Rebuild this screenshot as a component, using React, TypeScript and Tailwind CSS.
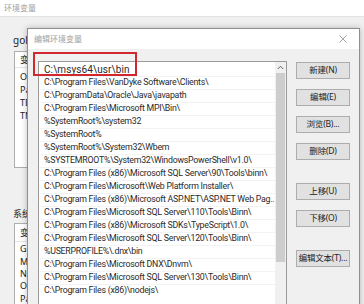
import React from "react";

const paths: string[] = [
  "C:\\Program Files\\VanDyke Software\\Clients\\",
  "C:\\ProgramData\\Oracle\\Java\\javapath",
  "C:\\Program Files\\Microsoft MPI\\Bin\\",
  "%SystemRoot%\\system32",
  "%SystemRoot%",
  "%SystemRoot%\\System32\\Wbem",
  "%SYSTEMROOT%\\System32\\WindowsPowerShell\\v1.0\\",
  "C:\\Program Files (x86)\\Microsoft SQL Server\\90\\Tools\\binn\\",
  "C:\\Program Files\\Microsoft\\Web Platform Installer\\",
  "C:\\Program Files (x86)\\Microsoft ASP.NET\\ASP.NET Web Pag...",
  "C:\\Program Files\\Microsoft SQL Server\\110\\Tools\\Binn\\",
  "C:\\Program Files (x86)\\Microsoft SDKs\\TypeScript\\1.0\\",
  "C:\\Program Files\\Microsoft SQL Server\\120\\Tools\\Binn\\",
  "%USERPROFILE%\\.dnx\\bin",
  "C:\\Program Files\\Microsoft DNX\\Dnvm\\",
  "C:\\Program Files\\Microsoft SQL Server\\130\\Tools\\Binn\\",
  "C:\\Program Files (x86)\\nodejs\\",
];

const font = {
  fontFamily: '"Noto Sans", "Noto Sans CJK SC", sans-serif',
};

const listFont = {
  fontFamily: 'Roboto, "Noto Sans CJK SC", sans-serif',
};

function Btn({ label, className }: { label: string; className?: string }) {
  return (
    <div
      className={
        "w-[54px] h-[17px] border border-[#adadad] bg-[#e1e1e1] flex items-center justify-center whitespace-nowrap text-[8.5px] tracking-[-0.2px] leading-none text-[#222] " +
        (className ?? "")
      }
    >
      {label}
    </div>
  );
}

export default function App() {
  return (
    <div
      className="w-[364px] h-[304px] relative overflow-hidden bg-[#f0f0f0]"
      style={font}
    >
      {/* background window */}
      <div className="h-[17px] bg-white border-b border-[#e3e3e3] pl-[4px] flex items-center text-[8px] text-[#a0a0a0]">
        环境变量
      </div>
      <div className="w-[28px] overflow-hidden pl-[13px]">
        <div className="mt-[17px] h-[12px] flex items-center whitespace-nowrap text-[10px] text-[#222]">
          gola
        </div>
        <div className="mt-[5px] ml-[1px] w-[60px] h-[117px] border border-[#adadad] bg-white text-[9px] text-[#222]">
          <div className="h-[16px] pl-[5px] flex items-center border-b border-[#e5e5e5]">变</div>
          <div className="h-[13px] pl-[5px] mt-[2px] flex items-center">O</div>
          <div className="h-[13px] pl-[5px] flex items-center">Pa</div>
          <div className="h-[13px] pl-[5px] flex items-center">TE</div>
          <div className="h-[13px] pl-[5px] flex items-center">TM</div>
        </div>
        <div className="mt-[40px] h-[12px] flex items-center whitespace-nowrap text-[9px] text-[#222]">
          系统
        </div>
        <div className="mt-[3px] ml-[1px] w-[60px] h-[100px] border border-[#adadad] bg-white text-[9px] text-[#222]">
          <div className="h-[18px] pl-[5px] flex items-center border-b border-[#e5e5e5]">变</div>
          <div className="h-[13px] pl-[5px] flex items-center">G</div>
          <div className="h-[13px] pl-[5px] flex items-center">M</div>
          <div className="h-[12px] pl-[5px] flex items-center">N</div>
          <div className="h-[12px] pl-[5px] flex items-center">O</div>
          <div className="h-[14px] pl-[5px] flex items-center">Pa</div>
        </div>
      </div>

      {/* front dialog */}
      <div className="absolute left-[27px] top-[28px] w-[333px] h-[290px] bg-[#f0f0f0] border border-[#8f8f8f] shadow-[0_0_6px_rgba(0,0,0,0.25)]">
        <div className="h-[20px] bg-white flex items-center justify-between pl-[6px] pr-[12px]">
          <span className="text-[8px] text-[#a0a0a0]">编辑环境变量</span>
          <svg width="8" height="8" viewBox="0 0 8 8">
            <path d="M0.5 0.5 L7.5 7.5 M7.5 0.5 L0.5 7.5" stroke="#9a9a9a" strokeWidth="0.9" />
          </svg>
        </div>
        <div className="flex pl-[10px] pt-[12px]">
          <div className="w-[249px] h-[260px] border border-[#9a9a9a] bg-white flex">
            <div
              className="flex-1 min-w-0 flex flex-col text-[8.8px] tracking-[-0.25px] text-[#2a2a2a]"
              style={listFont}
            >
              <div className="h-[14px] pl-[5px] flex items-center whitespace-nowrap text-[10px] tracking-[0.1px]">
                {"C:\\msys64\\usr\\bin"}
              </div>
              {paths.map((p, i) => (
                <div
                  key={i}
                  className="h-[13px] pl-[5px] flex items-center whitespace-nowrap overflow-hidden border-t border-[#f3f3f3]"
                >
                  {p}
                </div>
              ))}
            </div>
            <div className="w-[11px] bg-[#f0f0f0] flex flex-col items-center">
              <div className="h-[11px] flex items-center justify-center">
                <svg width="7" height="5" viewBox="0 0 7 5">
                  <path d="M0.8 4 L3.5 1.2 L6.2 4" stroke="#606060" strokeWidth="1" fill="none" />
                </svg>
              </div>
              <div className="w-[9px] h-[189px] bg-[#cdcdcd]" />
            </div>
          </div>
          <div className="ml-[9px] mt-[1px] flex flex-col">
            <Btn label="新建(N)" />
            <Btn label="编辑(E)" className="mt-[10px]" />
            <Btn label="浏览(B)..." className="mt-[10px]" />
            <Btn label="删除(D)" className="mt-[10px]" />
            <Btn label="上移(U)" className="mt-[23px]" />
            <Btn label="下移(O)" className="mt-[10px]" />
            <Btn label="编辑文本(T)..." className="mt-[23px]" />
          </div>
        </div>
      </div>

      {/* red annotation box */}
      <div className="absolute left-[33px] top-[52px] w-[104px] h-[24px] border-2 border-[#d0282e]" />
    </div>
  );
}
